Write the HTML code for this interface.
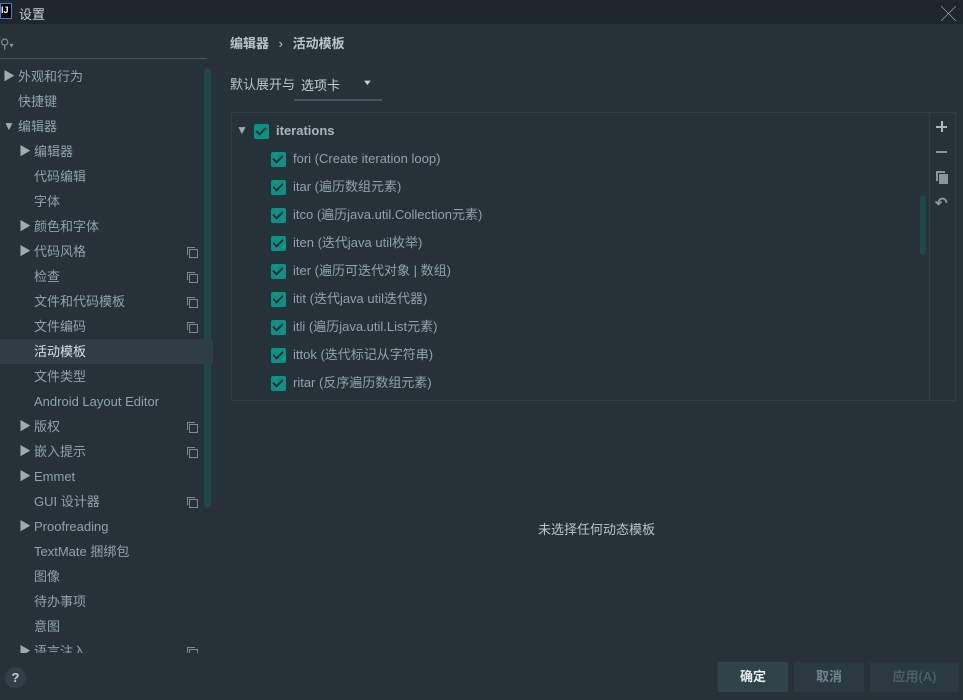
<!DOCTYPE html>
<html><head><meta charset="utf-8"><style>
*{margin:0;padding:0;box-sizing:border-box}
body{width:963px;height:700px;background:#263238;font-family:"Liberation Sans","Noto Sans CJK SC",sans-serif;font-size:13px;color:#8fa3ad;position:relative;overflow:hidden}
.a{position:absolute;white-space:nowrap}
.tb{left:0;top:0;width:963px;height:24px;background:#1e272c}
.side .r{position:absolute;height:25px;line-height:25px;left:0;width:213px}
.tri{font-size:12px;color:#a0aab0}
.cp{position:absolute;left:187px;top:8px;width:9px;height:9px}
.cp:before{content:"";position:absolute;left:0;top:0;width:7px;height:7px;border:1px solid #7d8a90;border-width:1px 0 0 1px}
.cp:after{content:"";position:absolute;left:2px;top:2px;width:7px;height:7px;border:1px solid #7d8a90}
.cb{display:inline-block;width:15px;height:15px;background:#009688;border-radius:2px;position:relative;vertical-align:middle}
.cb:after{content:"";position:absolute;left:4px;top:1px;width:4px;height:8px;border:solid #1e272c;border-width:0 2px 2px 0;transform:rotate(45deg)}
.it{position:absolute;left:271px;height:28px;line-height:28px}
.it span{margin-left:7px}
.btn{top:662px;height:30px;line-height:30px;text-align:center;font-weight:bold}
</style></head><body>
<div class="a tb"></div>
<div class="a" style="left:0;top:3px;width:12px;height:16px;border:1px solid #3a7fd6;background:#000;color:#fff;font-size:9px;line-height:12px;font-weight:bold">IJ</div>
<div class="a" style="left:19px;top:4px;color:#c8d0d4;font-size:13px">设置</div>
<div class="a" style="left:941px;top:3px;color:#b0b8bc;font-size:15px;font-weight:normal">╳</div>
<div class="a" style="left:0;top:36px;color:#8a969c;font-size:13px">⚲<span style="font-size:8px">▾</span></div>
<div class="a" style="left:0;top:58px;width:207px;height:1px;background:#46565e"></div>
<div class="a" style="left:204px;top:68px;width:7px;height:440px;background:#1f4948;border-radius:4px"></div>
<div class="side">
<div class="r" style="top:64px"><span class="a tri" style="left:3px;top:0">▶</span><span class="a" style="left:18px">外观和行为</span></div>
<div class="r" style="top:89px"><span class="a" style="left:18px">快捷键</span></div>
<div class="r" style="top:114px"><span class="a tri" style="left:3px">▼</span><span class="a" style="left:18px">编辑器</span></div>
<div class="r" style="top:139px"><span class="a tri" style="left:19px">▶</span><span class="a" style="left:34px">编辑器</span></div>
<div class="r" style="top:164px"><span class="a" style="left:34px">代码编辑</span></div>
<div class="r" style="top:189px"><span class="a" style="left:34px">字体</span></div>
<div class="r" style="top:214px"><span class="a tri" style="left:19px">▶</span><span class="a" style="left:34px">颜色和字体</span></div>
<div class="r" style="top:239px"><span class="a tri" style="left:19px">▶</span><span class="a" style="left:34px">代码风格</span><span class="cp"></span></div>
<div class="r" style="top:264px"><span class="a" style="left:34px">检查</span><span class="cp"></span></div>
<div class="r" style="top:289px"><span class="a" style="left:34px">文件和代码模板</span><span class="cp"></span></div>
<div class="r" style="top:314px"><span class="a" style="left:34px">文件编码</span><span class="cp"></span></div>
<div class="r" style="top:339px;background:#2f3e45;width:213px"><span class="a" style="left:34px;color:#d8e0e4">活动模板</span></div>
<div class="r" style="top:364px"><span class="a" style="left:34px">文件类型</span></div>
<div class="r" style="top:389px"><span class="a" style="left:34px">Android Layout Editor</span></div>
<div class="r" style="top:414px"><span class="a tri" style="left:19px">▶</span><span class="a" style="left:34px">版权</span><span class="cp"></span></div>
<div class="r" style="top:439px"><span class="a tri" style="left:19px">▶</span><span class="a" style="left:34px">嵌入提示</span><span class="cp"></span></div>
<div class="r" style="top:464px"><span class="a tri" style="left:19px">▶</span><span class="a" style="left:34px">Emmet</span></div>
<div class="r" style="top:489px"><span class="a" style="left:34px">GUI 设计器</span><span class="cp"></span></div>
<div class="r" style="top:514px"><span class="a tri" style="left:19px">▶</span><span class="a" style="left:34px">Proofreading</span></div>
<div class="r" style="top:539px"><span class="a" style="left:34px">TextMate 捆绑包</span></div>
<div class="r" style="top:564px"><span class="a" style="left:34px">图像</span></div>
<div class="r" style="top:589px"><span class="a" style="left:34px">待办事项</span></div>
<div class="r" style="top:614px"><span class="a" style="left:34px">意图</span></div>
<div class="r" style="top:639px;height:14px;overflow:hidden"><span class="a tri" style="left:19px">▶</span><span class="a" style="left:34px">语言注入</span><span class="cp"></span></div>
</div>
<div class="a" style="left:5px;top:667px;width:21px;height:21px;border-radius:50%;background:#323f46;color:#c8d0d4;text-align:center;line-height:21px;font-weight:bold;font-size:13px">?</div>

<div class="a" style="left:230px;top:33px;color:#b8c4ca;font-weight:bold">编辑器 <span style="font-weight:normal;margin:0 6px">›</span> 活动模板</div>
<div class="a" style="left:230px;top:74px;color:#b8c4ca">默认展开与</div>
<div class="a" style="left:301px;top:75px;color:#c8d0d4">选项卡</div>
<div class="a" style="left:362px;top:77px;color:#c8d0d4;font-size:11px;transform:scaleY(0.7)">▼</div>
<div class="a" style="left:294px;top:99px;width:88px;height:2px;background:#46565e"></div>

<div class="a" style="left:231px;top:112px;width:725px;height:289px;border:1px solid #2f3d44"></div>
<div class="a" style="left:929px;top:113px;width:1px;height:287px;background:#2f3d44"></div>
<div class="a" style="left:920px;top:195px;width:6px;height:60px;background:#1f4948;border-radius:3px"></div>
<div class="a" style="left:936px;top:126px;width:11px;height:2px;background:#b0b8bc"></div>
<div class="a" style="left:940.5px;top:121px;width:2px;height:11px;background:#b0b8bc"></div>
<div class="a" style="left:936px;top:151px;width:11px;height:2px;background:#8a969c"></div>
<div class="a" style="left:936px;top:171px;width:9px;height:10px;border:2px solid #8a969c;border-width:2px 0 0 2px"></div>
<div class="a" style="left:939px;top:174px;width:9px;height:10px;background:#8a969c"></div>
<div class="a" style="left:935px;top:194px;color:#8a969c;font-size:15px;font-weight:bold">↶</div>

<div class="a" style="left:236px;top:123px;font-size:12px;color:#a0aab0">▼</div>
<div class="a" style="left:254px;top:123px"><span class="cb"></span><span style="margin-left:7px;font-weight:bold;color:#a8b6bd">iterations</span></div>
<div class="it" style="top:145px"><span class="cb" style="margin:0"></span><span>fori (Create iteration loop)</span></div>
<div class="it" style="top:173px"><span class="cb" style="margin:0"></span><span>itar (遍历数组元素)</span></div>
<div class="it" style="top:201px"><span class="cb" style="margin:0"></span><span>itco (遍历java.util.Collection元素)</span></div>
<div class="it" style="top:229px"><span class="cb" style="margin:0"></span><span>iten (迭代java util枚举)</span></div>
<div class="it" style="top:257px"><span class="cb" style="margin:0"></span><span>iter (遍历可迭代对象 | 数组)</span></div>
<div class="it" style="top:285px"><span class="cb" style="margin:0"></span><span>itit (迭代java util迭代器)</span></div>
<div class="it" style="top:313px"><span class="cb" style="margin:0"></span><span>itli (遍历java.util.List元素)</span></div>
<div class="it" style="top:341px"><span class="cb" style="margin:0"></span><span>ittok (迭代标记从字符串)</span></div>
<div class="it" style="top:369px"><span class="cb" style="margin:0"></span><span>ritar (反序遍历数组元素)</span></div>

<div class="a" style="left:538px;top:519px;color:#b8c4ca">未选择任何动态模板</div>

<div class="a btn" style="left:718px;width:70px;background:#2f4448;color:#e8eef0">确定</div>
<div class="a btn" style="left:794px;width:70px;background:#2b3a41;color:#6f8690">取消</div>
<div class="a btn" style="left:870px;width:89px;background:#2b3a41;color:#4a5e66">应用(A)</div>
</body></html>
